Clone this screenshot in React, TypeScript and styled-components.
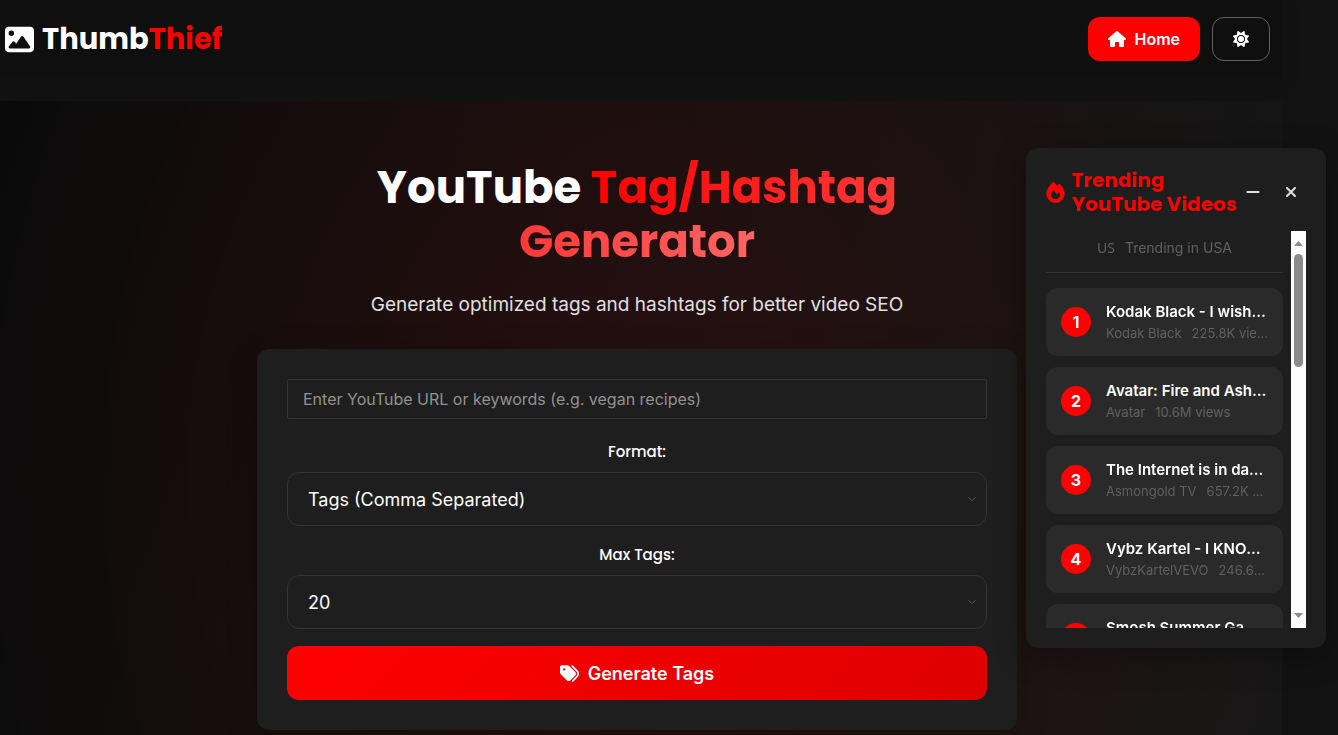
import React from "react";
import styled, { createGlobalStyle } from "styled-components";
import { FaFire, FaHouse, FaImage, FaSun, FaTags, FaMinus, FaXmark } from "react-icons/fa6";

const display = `Poppins, Inter, "Liberation Sans", sans-serif`;

const GlobalStyle = createGlobalStyle`
  *, *::before, *::after { box-sizing: border-box; }
  body {
    margin: 0;
    background: #121212;
    color: #ffffff;
    font-family: Inter, "Liberation Sans", sans-serif;
    overflow: hidden;
  }
  button, input, select { font-family: inherit; color: inherit; }
  h1, h2, p, ul { margin: 0; padding: 0; }
`;

const Page = styled.div`
  height: 100vh;
  display: flex;
  flex-direction: column;
  padding-right: 56px;
  overflow: hidden;
`;

const Header = styled.header`
  display: flex;
  align-items: center;
  justify-content: space-between;
  padding: 17px 12px 16px 5px;
  margin-bottom: 24px;
  background: #0f0f0f;
  box-shadow: 0 4px 20px rgba(0, 0, 0, 0.1);
`;

const Logo = styled.a`
  display: flex;
  align-items: center;
  gap: 8px;
  font-family: ${display};
  font-size: 29px;
  line-height: 44px;
  font-weight: 700;
  color: #ffffff;
  text-decoration: none;
`;

const Accent = styled.span`
  color: #ff0000;
`;

const Nav = styled.nav`
  display: flex;
  gap: 12px;
`;

const HomeLink = styled.a`
  display: flex;
  align-items: center;
  gap: 8px;
  height: 44px;
  padding: 0 20px;
  border-radius: 12px;
  background: #ff0000;
  color: #ffffff;
  font-size: 16px;
  font-weight: 600;
  text-decoration: none;
`;

const ThemeButton = styled.button`
  display: flex;
  align-items: center;
  justify-content: center;
  width: 58px;
  height: 44px;
  border: 1px solid #606060;
  border-radius: 12px;
  background: transparent;
  font-size: 16px;
`;

const Hero = styled.main`
  flex: 1;
  display: flex;
  flex-direction: column;
  align-items: center;
  padding: 60px 8px 0 0;
  background:
    radial-gradient(ellipse 54% 140% at 50% 60%, rgba(255, 0, 0, 0.1) 0%, transparent 100%),
    linear-gradient(110deg, #0a0a0a 0%, #171717 100%);
`;

const Title = styled.h1`
  max-width: 600px;
  font-family: ${display};
  font-size: 45px;
  line-height: 54px;
  font-weight: 700;
  text-align: center;
`;

const GradientText = styled.span`
  background: linear-gradient(90deg, #ff0000, #ff6464);
  background-clip: text;
  -webkit-background-clip: text;
  color: transparent;
`;

const Subtitle = styled.p`
  margin-top: 21px;
  font-size: 19px;
  line-height: 30px;
  color: #e0e0e0;
`;

const FormCard = styled.form`
  width: 100%;
  max-width: 760px;
  margin-top: 29px;
  padding: 30px;
  display: flex;
  flex-direction: column;
  border-radius: 12px;
  background: #1e1e1e;
  box-shadow: 0 8px 32px rgba(0, 0, 0, 0.2);
`;

const KeywordInput = styled.input`
  height: 40px;
  margin-bottom: 4px;
  padding: 0 15px;
  border: 1px solid #333333;
  border-radius: 2px;
  background: #1e1e1e;
  font-size: 16px;
  outline: none;
  &::placeholder { color: #929292; opacity: 1; }
`;

const FieldLabel = styled.label`
  margin-top: 16px;
  margin-bottom: 8px;
  font-family: ${display};
  font-size: 15px;
  line-height: 25px;
  font-weight: 500;
  text-align: center;
`;

const SelectWrap = styled.div`
  display: grid;
  align-items: center;
  & > * { grid-area: 1 / 1; }
  & > svg { justify-self: end; margin-right: 10px; pointer-events: none; }
`;

const Select = styled.select`
  appearance: none;
  height: 54px;
  padding: 0 20px;
  border: 1px solid #333333;
  border-radius: 12px;
  background: #1e1e1e;
  font-size: 18px;
  outline: none;
`;

const GenerateButton = styled.button`
  display: flex;
  align-items: center;
  justify-content: center;
  gap: 9px;
  height: 54px;
  margin-top: 17px;
  border: 0;
  border-radius: 12px;
  background: linear-gradient(135deg, #ff0000, #dd0000);
  font-size: 18px;
  font-weight: 600;
`;

const Panel = styled.aside`
  position: fixed;
  top: 148px;
  right: 12px;
  width: 300px;
  height: 500px;
  padding: 20px;
  display: flex;
  flex-direction: column;
  border-radius: 12px;
  background: #1e1e1e;
  box-shadow: 0 8px 32px rgba(0, 0, 0, 0.3);
`;

const PanelHeader = styled.div`
  display: flex;
  align-items: center;
  gap: 8px;
  margin-bottom: 15px;
  color: #ff0000;
`;

const Flame = styled.span`
  flex: none;
  display: flex;
  justify-content: center;
  width: 18px;
  & > svg { flex: none; }
`;

const PanelTitle = styled.h2`
  flex: 1;
  min-width: 0;
  font-family: ${display};
  font-size: 20px;
  line-height: 24px;
  font-weight: 700;
  white-space: nowrap;
`;

const PanelActions = styled.div`
  display: flex;
  gap: 8px;
  margin-left: -8px;
`;

const PanelButton = styled.button`
  display: flex;
  align-items: center;
  justify-content: center;
  width: 30px;
  height: 30px;
  padding: 0;
  border: 0;
  background: transparent;
  color: #e0e0e0;
  font-size: 16px;
`;

const PanelBody = styled.div`
  flex: 1;
  min-height: 0;
  display: flex;
  gap: 8px;
`;

const ScrollArea = styled.div`
  flex: 1;
  min-width: 0;
  overflow-y: auto;
  scrollbar-width: none;
`;

const Region = styled.p`
  display: flex;
  justify-content: center;
  gap: 10px;
  padding: 5px 0 13px;
  margin-bottom: 15px;
  border-bottom: 1px solid #333333;
  font-size: 14px;
  line-height: 23px;
  color: #606060;
`;

const RegionCode = styled.span`
  font-family: "Noto Sans", "Liberation Sans", sans-serif;
`;

const VideoList = styled.ul`
  display: flex;
  flex-direction: column;
  gap: 11px;
  list-style: none;
`;

const VideoCard = styled.li`
  display: flex;
  align-items: center;
  gap: 15px;
  padding: 12px 15px 13px;
  border-radius: 12px;
  background: #2a2a2a;
`;

const Rank = styled.span`
  flex: none;
  width: 30px;
  height: 30px;
  border-radius: 50%;
  background: #ff0000;
  font-size: 16px;
  line-height: 30px;
  font-weight: 700;
  text-align: center;
`;

const VideoText = styled.div`
  flex: 1;
  min-width: 0;
  & > p {
    overflow: hidden;
    white-space: nowrap;
    text-overflow: ellipsis;
  }
`;

const VideoTitle = styled.p`
  font-size: 15px;
  line-height: 24px;
  font-weight: 600;
`;

const VideoMeta = styled.p`
  font-size: 13px;
  line-height: 19px;
  color: #606060;
`;

const Channel = styled.span`
  margin-right: 10px;
`;

const ScrollTrack = styled.div`
  flex: none;
  width: 15px;
  display: flex;
  flex-direction: column;
  align-items: center;
  padding: 10px 0;
  background: #fcfcfc;
`;

const ScrollThumb = styled.div`
  width: 9px;
  height: 113px;
  margin-top: 8px;
  margin-bottom: auto;
  border-radius: 5px;
  background: #8b8b8b;
`;

const videos = [
  { title: "Kodak Black - I wish it was a dream", channel: "Kodak Black", views: "225.8K views" },
  { title: "Avatar: Fire and Ash | Official Trailer", channel: "Avatar", views: "10.6M views" },
  { title: "The Internet is in danger again", channel: "Asmongold TV", views: "657.2K views" },
  { title: "Vybz Kartel - I KNOW BETTER", channel: "VybzKartelVEVO", views: "246.6K views" },
  { title: "Smosh Summer Games 2025", channel: "Smosh", views: "512.3K views" },
];

const Chevron = () => (
  <svg width="10" height="6" viewBox="0 0 10 6" fill="none" stroke="#5a5a66" aria-hidden="true">
    <path d="M1.5 1.2 L5 4.7 L8.5 1.2" />
  </svg>
);

const ScrollArrow = ({ down = false }: { down?: boolean }) => (
  <svg width="9" height="5" viewBox="0 0 9 5" fill="#8b8b8b" aria-hidden="true">
    <path d={down ? "M0 0H9L4.5 5Z" : "M0 5H9L4.5 0Z"} />
  </svg>
);

export default function App() {
  return (
    <>
      <GlobalStyle />
      <Page>
        <Header>
          <Logo href="#">
            <FaImage size={29} />
            <span>Thumb<Accent>Thief</Accent></span>
          </Logo>
          <Nav>
            <HomeLink href="#"><FaHouse size={18} />Home</HomeLink>
            <ThemeButton aria-label="Toggle theme"><FaSun /></ThemeButton>
          </Nav>
        </Header>
        <Hero>
          <Title>YouTube <GradientText>Tag/Hashtag Generator</GradientText></Title>
          <Subtitle>Generate optimized tags and hashtags for better video SEO</Subtitle>
          <FormCard onSubmit={(event) => event.preventDefault()}>
            <KeywordInput
              type="text"
              aria-label="YouTube URL or keywords"
              placeholder="Enter YouTube URL or keywords (e.g. vegan recipes)"
            />
            <FieldLabel htmlFor="format">Format:</FieldLabel>
            <SelectWrap>
              <Select id="format" defaultValue="tags">
                <option value="tags">Tags (Comma Separated)</option>
              </Select>
              <Chevron />
            </SelectWrap>
            <FieldLabel htmlFor="max-tags">Max Tags:</FieldLabel>
            <SelectWrap>
              <Select id="max-tags" defaultValue="20">
                <option value="20">20</option>
              </Select>
              <Chevron />
            </SelectWrap>
            <GenerateButton type="submit"><FaTags size={19} />Generate Tags</GenerateButton>
          </FormCard>
        </Hero>
      </Page>
      <Panel>
        <PanelHeader>
          <Flame><FaFire size={21} /></Flame>
          <PanelTitle>Trending<br />YouTube Videos</PanelTitle>
          <PanelActions>
            <PanelButton aria-label="Minimize"><FaMinus /></PanelButton>
            <PanelButton aria-label="Close"><FaXmark /></PanelButton>
          </PanelActions>
        </PanelHeader>
        <PanelBody>
          <ScrollArea>
            <Region><RegionCode>US</RegionCode>Trending in USA</Region>
            <VideoList>
              {videos.map((video, index) => (
                <VideoCard key={video.title}>
                  <Rank>{index + 1}</Rank>
                  <VideoText>
                    <VideoTitle>{video.title}</VideoTitle>
                    <VideoMeta><Channel>{video.channel}</Channel>{video.views}</VideoMeta>
                  </VideoText>
                </VideoCard>
              ))}
            </VideoList>
          </ScrollArea>
          <ScrollTrack aria-hidden="true">
            <ScrollArrow />
            <ScrollThumb />
            <ScrollArrow down />
          </ScrollTrack>
        </PanelBody>
      </Panel>
    </>
  );
}
